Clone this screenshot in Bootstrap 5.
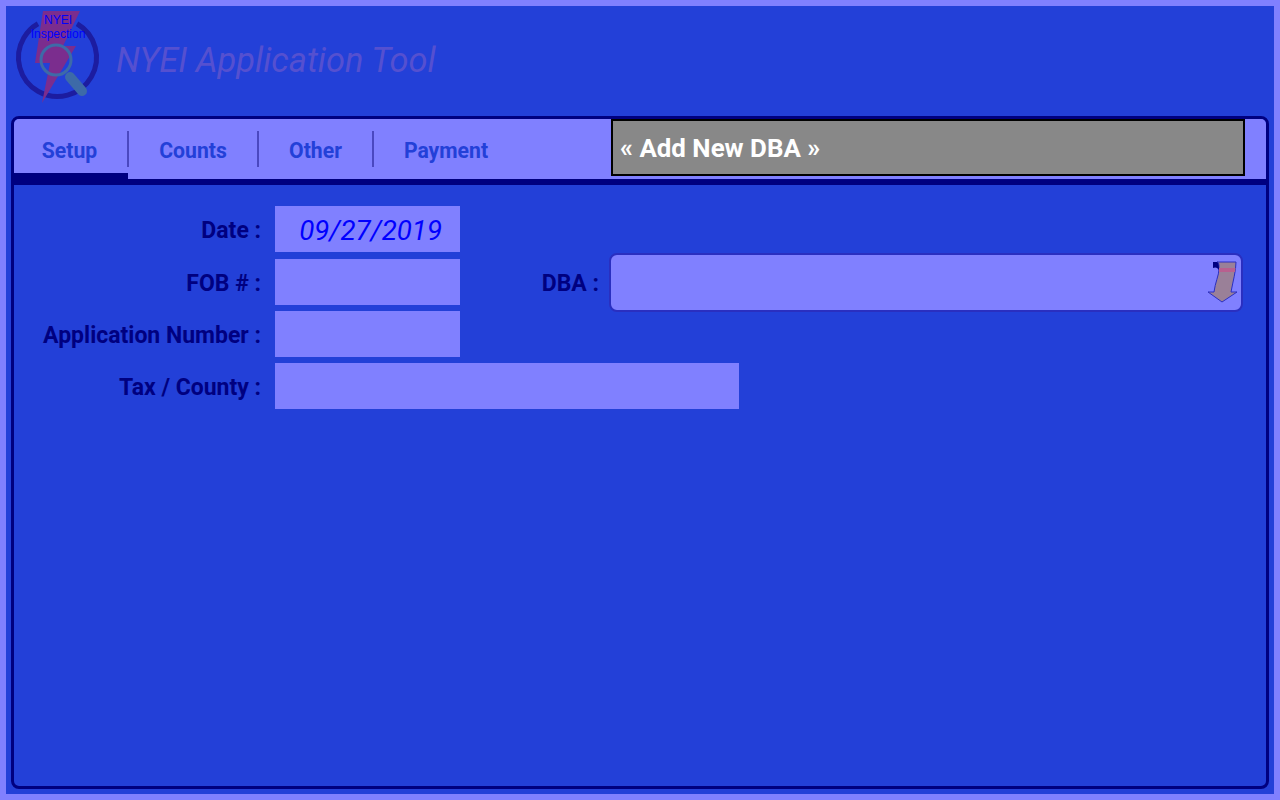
<!DOCTYPE html>
<html lang="en">
<head>
<meta charset="utf-8">
<title>NYEI Application Tool</title>
<link rel="stylesheet" href="https://cdn.jsdelivr.net/npm/bootstrap@5.3.0/dist/css/bootstrap.min.css">
<style>
html,body{height:100%;margin:0;overflow:hidden}
body{font-family:Roboto,"Liberation Sans",sans-serif;background:#2340d8}
.app-frame{height:800px;border:6px solid #8080ff;background:#2340d8;padding:0 5px 5px}
.app-head{height:110px;padding-left:4px;gap:15px}
.app-logo{position:relative;width:86px;height:94px;flex:none;margin-top:5px}
.app-logo svg{display:block;overflow:visible}
.logo-text{position:absolute;left:0;width:86px;text-align:center;font-family:"Liberation Sans",sans-serif;color:#0000ff;font-size:12px;line-height:14px}
.logo-a{top:2px}
.logo-b{top:16px}
.app-title{font-size:34.4px;font-style:italic;font-weight:400;color:#5550d0;margin:-7px 0 0;line-height:1;padding-top:5px;align-self:center}
.app-panel{height:673px;border:3px solid #000080;border-radius:8px;overflow:hidden}
.tab-strip{height:66px;background:#8080ff;border-bottom:6px solid #000080}
.tab-list{width:597px;flex:none;height:60px}
.tab-item{display:flex;align-items:center;justify-content:center;height:60px;padding:4px 2px 0 0;position:relative;font-size:21.2px;font-weight:700;color:#2340d8}
.tab-item.on{padding:4px 4px 0 0}
.tab-item.on::before{content:"";position:absolute;left:0;bottom:0;width:114px;height:6px;background:#000080}
.tab-item.sep::after{content:"";position:absolute;right:0;top:12px;height:36px;width:2px;background:#4a48c0}
.t1{width:115px}.t2{width:130px}.t3{width:115px}.t4{width:146px}
.add-dba{width:634px;height:57px;background:#888;border:2px solid #000;color:#fff;font-size:25.9px;font-weight:700;padding:1px 7px 0;display:flex;align-items:center}
.form-area{padding:21px 0 0 0}
.form-grid{display:grid;grid-template-columns:261px 185px 149px 634px;grid-template-rows:47px 46px 46px 46px;row-gap:6px}
.form-label-x{font-size:23px;font-weight:700;color:#000080;text-align:right;line-height:50px;white-space:nowrap;padding-right:14px}
.form-box{background:#8080ff}
.wide-box{width:464px}
.date-box{height:46px;font-size:27.7px;font-style:italic;color:#0000ff;text-align:right;line-height:49px;padding-right:18px}
.dba-label{padding-right:10px}
.dba-box{position:relative;height:59px;margin-top:-6px;background:#8080ff;border:2px solid #2a2fc0;border-radius:8px}
.dba-arrow{position:absolute;right:1px;top:6px}
</style>
</head>
<body>
<div class="app-frame d-flex flex-column">
  <div class="app-head d-flex align-items-start">
    <div class="app-logo">
      <svg width="86" height="94" viewBox="0 0 86 94">
        <circle cx="42.500" cy="46.500" r="39" fill="none" stroke="#1c1ca0" stroke-width="5" pathLength="360" stroke-dasharray="300 60" transform="rotate(-60 42.500 46.500)"/>
        <path d="M28 0H65L48 35H61L27 92L35 52H20Z" fill="#7b2d8e"/>
        <circle cx="41" cy="49" r="15" fill="none" stroke="#3d6aa8" stroke-width="3"/>
        <path d="M55 66L67 80" stroke="#3d6aa8" stroke-width="10" stroke-linecap="round"/>
      </svg>
      <div class="logo-text logo-a">NYEI</div>
      <div class="logo-text logo-b">Inspection</div>
    </div>
    <h1 class="app-title">NYEI Application Tool</h1>
  </div>
  <div class="app-panel">
    <div class="tab-strip d-flex">
      <div class="tab-list d-flex">
        <div class="tab-item on sep t1">Setup</div>
        <div class="tab-item sep t2">Counts</div>
        <div class="tab-item sep t3">Other</div>
        <div class="tab-item t4">Payment</div>
      </div>
      <div class="add-dba">« Add New DBA »</div>
    </div>
    <div class="form-area">
      <div class="form-grid">
        <div class="form-label-x">Date :</div><div class="form-box date-box">09/27/2019</div><div></div><div></div>
        <div class="form-label-x">FOB # :</div><div class="form-box"></div>
        <div class="form-label-x dba-label">DBA :</div>
        <div class="dba-box">
          <svg class="dba-arrow" width="32" height="44" viewBox="0 0 32 44">
            <path d="M9 1H28C28 10 25 20 23 31H29L14 41L0 31H6C7 22 11 14 11 8C11 4 11 1 9 1Z" fill="#9a8098" stroke="#2a2fc0" stroke-width="1"/>
            <path d="M5 1H9C11 2 11 5 11 9C9 6 7 6 5 7Z" fill="#000080"/>
            <path d="M11 7H27.500L27 11H11Z" fill="#b8608f"/>
          </svg>
        </div>
        <div class="form-label-x">Application Number :</div><div class="form-box"></div><div></div><div></div>
        <div class="form-label-x">Tax / County :</div><div class="form-box wide-box"></div><div></div><div></div>
      </div>
    </div>
  </div>
</div>
<script src="https://cdn.jsdelivr.net/npm/bootstrap@5.3.0/dist/js/bootstrap.bundle.min.js"></script>
</body>
</html>
